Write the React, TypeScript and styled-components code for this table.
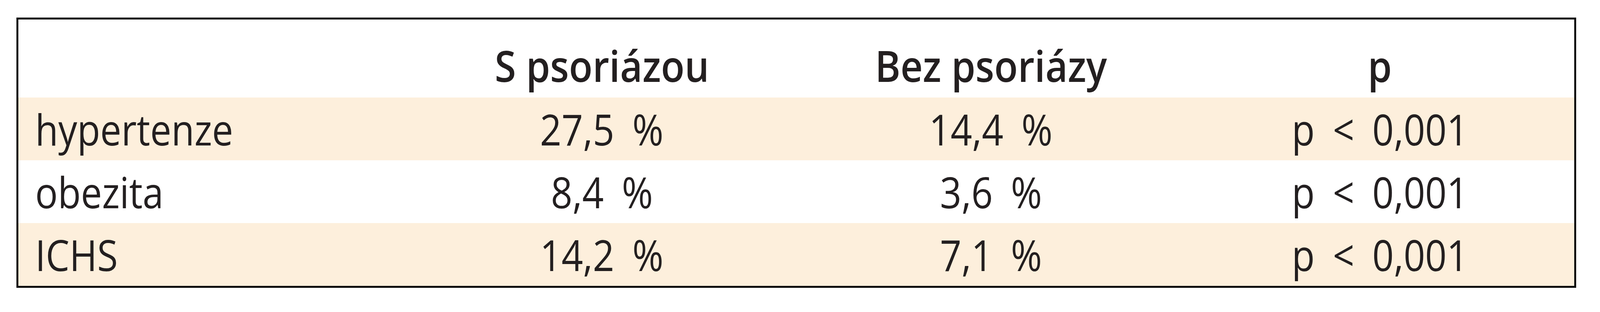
import React from "react";
import styled, { createGlobalStyle } from "styled-components";

/* The reference frame is 4392px wide; the browser viewport may be narrower,
   so horizontal measures are expressed relative to the viewport width. */
const FRAME = 4392;
const hx = (px: number) => `${((px / FRAME) * 100).toFixed(4)}vw`;

const Global = createGlobalStyle`
  html, body {
    margin: 0;
    padding: 0;
    background: #ffffff;
    overflow: hidden;
  }
  body {
    font-family: "Open Sans", "Noto Sans", "DejaVu Sans", sans-serif;
    color: #231f20;
  }
`;

const Page = styled.div`
  box-sizing: border-box;
  padding: 45px ${hx(65)} 0 ${hx(45)};
`;

const Table = styled.div`
  box-sizing: border-box;
  border: 5px solid #0d0d0d;
  display: flex;
  flex-direction: column;
  overflow: hidden;
`;

const Row = styled.div<{ $shaded?: boolean; $header?: boolean }>`
  display: grid;
  grid-template-columns: repeat(4, minmax(0, 1fr));
  box-sizing: border-box;
  height: ${(p) => (p.$header ? "200px" : "161px")};
  padding-top: ${(p) => (p.$header ? "62px" : "25px")};
  background: ${(p) => (p.$shaded ? "#fdefdc" : "#ffffff")};
  font-size: 110px;
  line-height: 110px;
  font-weight: ${(p) => (p.$header ? 600 : 400)};
  word-spacing: ${(p) => (p.$header ? "0" : "24px")};
`;

const Cell = styled.div<{ $first?: boolean }>`
  display: flex;
  justify-content: ${(p) => (p.$first ? "flex-start" : "center")};
  padding-left: ${(p) => (p.$first ? hx(46) : "0")};
  white-space: nowrap;
  min-width: 0;
`;

const Text = styled.span<{ $first?: boolean; $scale: number }>`
  display: inline-block;
  transform: scaleX(${(p) => p.$scale});
  transform-origin: ${(p) => (p.$first ? "left center" : "center center")};
`;

const header = ["", "S psoriázou", "Bez psoriázy", "p"];
const rows = [
  ["hypertenze", "27,5 %", "14,4 %", "p < 0,001"],
  ["obezita", "8,4 %", "3,6 %", "p < 0,001"],
  ["ICHS", "14,2 %", "7,1 %", "p < 0,001"],
];

export default function App() {
  const vw = typeof window !== "undefined" ? window.innerWidth : FRAME;
  const fit = Math.min(1, vw / FRAME);
  return (
    <>
      <Global />
      <Page>
        <Table>
          <Row $header>
            {header.map((h, i) => (
              <Cell key={i} $first={i === 0}>
                <Text $first={i === 0} $scale={0.965 * fit}>
                  {h}
                </Text>
              </Cell>
            ))}
          </Row>
          {rows.map((r, ri) => (
            <Row key={ri} $shaded={ri % 2 === 0}>
              {r.map((c, ci) => (
                <Cell key={ci} $first={ci === 0}>
                  <Text $first={ci === 0} $scale={0.94 * fit}>
                    {c}
                  </Text>
                </Cell>
              ))}
            </Row>
          ))}
        </Table>
      </Page>
    </>
  );
}
